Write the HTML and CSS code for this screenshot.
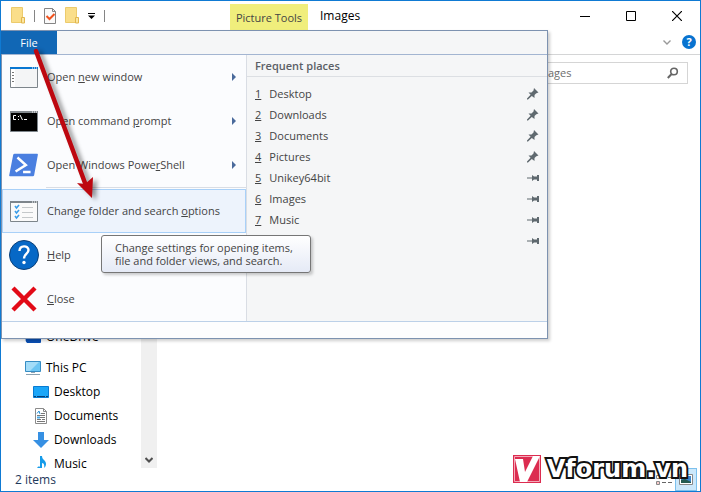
FILE: index.html
```html
<!DOCTYPE html>
<html lang="en">
<head>
<meta charset="utf-8">
<title>Images</title>
<link rel="stylesheet" href="styles.css">
</head>
<body>
<svg class="defs" aria-hidden="true">
  <symbol id="folder" viewBox="0 0 14 17"><path d="M.5.5h11v12h2v3H.5z" fill="#fade8a" stroke="#eccb6c"/><path d="M10.500 10.500h3v5.500h-3z" fill="#fbe7a3" stroke="#e2b64c"/></symbol>
  <symbol id="pinned" viewBox="0 0 12 12"><path d="M7 0l4.500 4.500-1.500.5-1 .5-1.500 1.500V10L4.800 7.900 1 11.500 0 11.500 0 10.500 3.600 6.700 1.500 4.500h3L6.500 2.500z" fill="#5f696f"/></symbol>
  <symbol id="unpinned" viewBox="0 0 12 8"><path d="M0 3.500h5V1l2 1.500h3V1h2v6h-2V5.500H7L5 7V4.500H0z" fill="#5f696f"/></symbol>
</svg>
<div class="window">
  <header class="titlebar">
    <div class="quick">
      <svg class="q-folder"><use href="#folder"/></svg>
      <span class="divider"></span>
      <button class="plain" aria-label="Properties"><svg width="12" height="16" viewBox="0 0 12 16"><path d="M.5.5h8l3 3v12H.5z" fill="#fafafa" stroke="#858585"/><path d="M8.500.5v3h3" fill="none" stroke="#858585"/><path d="M2.500 8l3 3 5-5" fill="none" stroke="#f0521d" stroke-width="2"/></svg></button>
      <button class="plain" aria-label="New folder"><svg class="q-folder"><use href="#folder"/></svg></button>
      <button class="plain" aria-label="Customize"><svg width="7" height="6" viewBox="0 0 7 6"><path d="M0 0h7v1H0zM0 2.500h7L3.500 6z"/></svg></button>
      <span class="divider"></span>
    </div>
    <div class="context">Picture Tools</div>
    <h1>Images</h1>
    <div class="controls">
      <button class="plain" aria-label="Minimize"><svg width="10" height="10"><path d="M0 5.500h10" stroke="#000"/></svg></button>
      <button class="plain" aria-label="Maximize"><svg width="10" height="10"><path d="M.5.5h9v9h-9z" fill="none" stroke="#000"/></svg></button>
      <button class="plain" aria-label="Close"><svg width="10" height="10"><path d="M0 0l10 10M10 0L0 10" stroke="#000" stroke-width="1.200"/></svg></button>
    </div>
  </header>
  <div class="ribbon">
    <button class="plain" aria-label="Expand ribbon"><svg width="8" height="5"><path d="M.5.5L4 4 7.500.5" fill="none" stroke="#999" stroke-width="1.400"/></svg></button>
    <button class="help" aria-label="Help">?</button>
  </div>
  <div class="address">
    <label class="search"><input type="search" placeholder="Search Images" aria-label="Search Images"><svg width="12" height="12" viewBox="0 0 12 12"><circle cx="7" cy="4.500" r="3.300" fill="none" stroke="#666" stroke-width="1.600"/><path d="M4.600 7L.8 11" stroke="#666" stroke-width="2"/></svg></label>
  </div>
  <main class="content">
    <nav class="sidebar">
      <ul>
        <li class="cloud"><svg width="16" height="16" viewBox="0 0 16 16"><path d="M2 14a4 4 0 0 1 2-7 4 4 0 0 1 8 0 3 3 0 0 1 3 7z" fill="#0a4fb4"/></svg><a href="#">OneDrive</a></li>
        <li><svg width="16" height="16" viewBox="0 0 16 16"><path d="M.5 1.500h15v10H.5z" fill="#6cc5f3" stroke="#368cc3"/><path d="M1 2h13L5 11H1z" fill="#a3dcf8"/><path d="M6 12h4v1H6z" fill="#8fa5b5"/><path d="M1 14.500h14" stroke="#8aa1b1"/></svg><a href="#">This PC</a></li>
        <li class="sub"><svg width="16" height="16" viewBox="0 0 16 16"><path d="M.5 2.500h15v11H.5z" fill="#1ba6f8" stroke="#087bd2"/><path d="M1 12.500h14" stroke="#063f75" stroke-dasharray="2 1 8 1"/></svg><a href="#">Desktop</a></li>
        <li class="sub"><svg width="16" height="16" viewBox="0 0 16 16"><path d="M2.500.5h8l3 3v12h-11z" fill="#fff" stroke="#8b8b8b"/><path d="M10.500.5v3h3" fill="none" stroke="#8b8b8b"/><path d="M4 7.500h8M4 9.500h8M4 11.500h4M9 11.500h3M4 13.500h8M8 5.500h4" stroke="#777"/><path d="M4 5.500L6 3l1 3" fill="none" stroke="#2a91d6"/><path d="M4 8.500h3v2H4z" fill="#4aa8e4"/></svg><a href="#">Documents</a></li>
        <li class="sub"><svg width="16" height="16" viewBox="0 0 16 16"><path d="M5 0h6v8h5l-8 8-8-8h5z" fill="#3690e3"/></svg><a href="#">Downloads</a></li>
        <li class="sub"><svg width="16" height="16" viewBox="0 0 16 16"><path d="M7 0h2c0 4 4 4 4 8 0 2-1 3-2 4 1-4-1-5-2-5v6c0 2-5 3-5 0 0-2 2-3 3-2z" fill="#159be9"/></svg><a href="#">Music</a></li>
      </ul>
      <div class="scroll"><svg width="8" height="6"><path d="M.5 1L4 4.500 7.500 1" fill="none" stroke="#505050" stroke-width="2"/></svg></div>
    </nav>
  </main>
  <footer class="status">
    <span>2 items</span>
    <div class="views">
      <button class="plain" aria-label="Details view"><svg width="16" height="10" viewBox="0 0 16 10"><path d="M.5.5h3v3h-3zM.5 6.500h3v3h-3z" fill="#fff" stroke="#888"/><path d="M6 2.500h4M12 2.500h4M6 7.500h4M12 7.500h4" stroke="#666"/><path d="M1.500 7.500h1v1h-1z" fill="#d33"/></svg></button>
      <button class="plain active" aria-label="Large icons view"><svg width="14" height="11" viewBox="0 0 14 11"><path d="M.5.5h13v10H.5z" fill="#fff" stroke="#888"/><path d="M2 2h10v7H2z" fill="#3d86ca"/><path d="M2 6l4-1 6 3v1H2z" fill="#245b50"/></svg></button>
    </div>
  </footer>

  <section class="menu">
    <button class="file">File</button>
    <div class="panels">
      <ul class="commands">
        <li><button><svg width="30" height="30" viewBox="0 0 30 30"><path d="M1.500 5.500h27v20h-27z" fill="#f4f5f6" stroke="#7d858b"/><path d="M1 5h28v2H1z" fill="#0877d2"/><path d="M2 7h4v18H2z" fill="#fff"/><path d="M3 10.500h2M3 13.500h2M3 16.500h2M3 19.500h2" stroke="#777"/><path d="M23 6h5" stroke="#fff" stroke-dasharray="1 1"/></svg><span>Open <u>n</u>ew window</span><i class="more"></i></button></li>
        <li><button><svg width="30" height="30" viewBox="0 0 30 30"><path d="M1.500 5.500h27v20h-27z" fill="#000" stroke="#7d858b"/><path d="M1 5h28v2H1z" fill="#858b90"/><path d="M23 6h5" stroke="#fff" stroke-dasharray="1 1"/><path d="M7 9.500H4.500v4H7M9.500 10v1M9.500 13v1M11 9l2.500 5M15 13.500h3" fill="none" stroke="#fff"/></svg><span>Open command <u>p</u>rompt</span><i class="more"></i></button></li>
        <li><button><svg width="32" height="30" viewBox="0 0 32 30"><path d="M6 3h24q1 0 .8 1l-4 22q-.3 1-1.300 1H1q-1 0-.8-1L4.500 4Q4.800 3 6 3z" fill="#4a7fe0"/><path d="M9 7l9 8-11 7M15 22.500h8" fill="none" stroke="#fff" stroke-width="2.600"/></svg><span>Open Windows Powe<u>r</u>Shell</span><i class="more"></i></button></li>
        <li class="rule"></li>
        <li class="hot"><button aria-describedby="tip"><svg width="30" height="30" viewBox="0 0 30 30"><path d="M1.500 5.500h27v20h-27z" fill="#fafafa" stroke="#7d858b"/><path d="M1 5h28v2H1z" fill="#7d858b"/><path d="M23 6h5" stroke="#fff" stroke-dasharray="1 1"/><path d="M13 11.500h11M13 16.500h11M13 21.500h11" stroke="#c4c8ca"/><path d="M6 10l1.500 2L10 9M6 15l1.500 2 2.500-3M6 20l1.500 2 2.500-3" fill="none" stroke="#3a9de8" stroke-width="1.600"/></svg><span>Change folder and search <u>o</u>ptions</span></button></li>
        <li><button><svg width="30" height="30" viewBox="0 0 30 30"><circle cx="15" cy="15" r="14.500" fill="#0668c6" stroke="#0a3f78"/><path d="M10.500 11c0-6 9-6 9-1 0 4-4.500 4-4.500 8.500" fill="none" stroke="#fff" stroke-width="2.400"/><circle cx="15" cy="22.500" r="1.700" fill="#fff"/></svg><span><u>H</u>elp</span></button></li>
        <li><button><svg width="30" height="30" viewBox="0 0 30 30"><path d="M4 4l22 22M26 4L4 26" stroke="#e20a17" stroke-width="4.400"/></svg><span><u>C</u>lose</span></button></li>
      </ul>
      <div class="places">
        <h2>Frequent places</h2>
        <ul>
          <li><u>1</u><a href="#">Desktop</a><svg><use href="#pinned"/></svg></li>
          <li><u>2</u><a href="#">Downloads</a><svg><use href="#pinned"/></svg></li>
          <li><u>3</u><a href="#">Documents</a><svg><use href="#pinned"/></svg></li>
          <li><u>4</u><a href="#">Pictures</a><svg><use href="#pinned"/></svg></li>
          <li><u>5</u><a href="#">Unikey64bit</a><svg class="flat"><use href="#unpinned"/></svg></li>
          <li><u>6</u><a href="#">Images</a><svg class="flat"><use href="#unpinned"/></svg></li>
          <li><u>7</u><a href="#">Music</a><svg class="flat"><use href="#unpinned"/></svg></li>
          <li><svg class="flat"><use href="#unpinned"/></svg></li>
        </ul>
      </div>
    </div>
    <div class="menu-foot"></div>
  </section>
  <div class="tooltip" id="tip" role="tooltip">Change settings for opening items,<br>file and folder views, and search.</div>
  <svg class="arrow" width="80" height="165" viewBox="0 0 80 165"><path d="M6 11L55 143" stroke="#bd0810" stroke-width="4.500" stroke-linecap="round"/><path d="M47 143l8 1 8-7-1 21z" fill="#bd0810"/></svg>
  <div class="brand">
    <svg width="28" height="28" viewBox="0 0 28 28"><path d="M0 0h28v28H0z" fill="#dc2c50"/><path d="M1.500 1.500h25v25h-25z" fill="none" stroke="#f4a9b8"/><path d="M2 4h8l2 13L20 1h7L14 27H7z" fill="#fff"/></svg>
    <span>Vforum.vn</span>
  </div>
</div>
</body>
</html>
```
FILE: styles.css
```css
* { box-sizing: border-box; }
body { margin: 0; font: 12px/16px "Open Sans", "Noto Sans", sans-serif; color: #000; }
ul { list-style: none; margin: 0; padding: 0; }
a { color: inherit; text-decoration: none; }
button { font: inherit; color: inherit; }
svg { display: block; flex: none; }
.defs { position: absolute; width: 0; height: 0; }
.plain { display: flex; align-items: center; justify-content: center; border: 0; padding: 0; background: none; }

.window { position: relative; display: flex; flex-direction: column; height: 100vh; border: 1px solid #0f7ad3; background: #fff; overflow: hidden; }
.titlebar { display: flex; align-items: center; height: 29px; }
.quick { display: flex; align-items: center; width: 229px; padding-left: 10px; gap: 9px; }
.q-folder { width: 14px; height: 17px; }
.divider { width: 1px; height: 12px; background: #858585; }
.context { align-self: flex-end; width: 78px; height: 26px; background: #f0ee7c; color: #444; font-size: 11px; line-height: 28px; text-align: center; }
h1 { flex: 1; margin: 0 0 0 12px; font-size: 12px; font-weight: 400; }
.controls { display: flex; }
.controls button { width: 46px; height: 28px; }
.ribbon { display: flex; align-items: center; justify-content: flex-end; gap: 11px; height: 25px; padding-right: 4px; border-bottom: 1px solid #d4d5d6; }
.help { width: 14px; height: 14px; padding: 0; border: 0; border-radius: 50%; background: #0873d0; color: #fff; font-size: 11px; font-weight: 700; line-height: 14px; }
.address { display: flex; justify-content: flex-end; padding: 7px 12px 5px; }
.search { display: flex; align-items: center; width: 200px; height: 22px; padding: 0 8px; border: 1px solid #d5d5d5; }
.search input { flex: 1; min-width: 0; border: 0; padding: 0; outline: 0; font: inherit; font-size: 11px; background: none; }
.search input::placeholder { color: #6d6d6d; opacity: 1; }

.content { display: flex; flex: 1; min-height: 0; }
.sidebar { display: flex; align-items: flex-end; width: 156px; overflow: hidden; }
.sidebar ul { flex: 1; margin-bottom: -8px; }
.sidebar li { display: flex; align-items: center; gap: 5px; height: 24px; padding-left: 24px; }
.sidebar .sub { padding-left: 32px; }
.sidebar .cloud { margin-bottom: 7px; }
.scroll { display: flex; align-items: flex-end; align-self: stretch; justify-content: center; width: 16px; padding-bottom: 5px; background: #f0f0f0; }
.status { display: flex; align-items: center; justify-content: space-between; height: 23px; padding-left: 14px; color: #1e395b; }
.views { display: flex; align-self: stretch; gap: 3px; padding-right: 3px; }
.views button { width: 17px; }
.views .active { width: 22px; border: 1px solid #7cc0ed; background: #cce8fb; }

.menu { position: absolute; top: 29px; left: 0; width: 547px; border: 1px solid #7d92b0; background: #f5f6f7; color: #444; font-size: 11px; box-shadow: 2px 2px 3px #0003; }
.file { display: block; width: 56px; height: 23px; margin-left: -1px; padding: 0; border: 0; background: #1167b5; color: #fff; }
.panels { display: grid; grid-template-columns: 245px 1fr; border-top: 1px solid #a3b5d1; border-bottom: 1px solid #bcd0e8; }
.commands { background: #fbfcfe; border-right: 1px solid #d9dde4; }
.commands button { display: flex; align-items: center; width: 100%; height: 44px; padding: 0 9px 0 6px; border: 1px solid transparent; background: none; text-align: left; }
.commands button svg { width: 30px; margin-right: 8px; overflow: visible; }
.commands span { flex: 1; white-space: nowrap; }
.more { border: 4px solid transparent; border-left-color: #4a6a9b; border-right: 0; }
.rule { height: 2px; margin-left: 44px; border-top: 1px solid #d9dde4; }
.commands .hot button { border-color: #a8d0f8; background: #edf3fc; }
h2 { margin: 0; padding: 3px 8px 2px; border-bottom: 1px solid #dcdfe3; font-size: 11px; font-weight: 600; line-height: 16px; color: #5b5f66; }
.places ul { padding: 6px 8px; }
.places li { display: flex; align-items: center; gap: 8px; height: 21px; }
.places a { flex: 1; }
.places svg { width: 12px; height: 12px; margin-left: auto; }
.places .flat { height: 8px; }
.menu-foot { height: 16px; background: #fdfdfe; }

.tooltip { position: absolute; top: 234px; left: 100px; padding: 5px 13px; min-width: 210px; border: 1px solid #767676; border-radius: 3px; background: linear-gradient(#fff, #e5eaf6); box-shadow: 2px 2px 3px #0003; color: #444; font-size: 11px; line-height: 13px; white-space: nowrap; }
.arrow { position: absolute; top: 39px; left: 29px; pointer-events: none; filter: drop-shadow(4px 2px 2px #0006); }
.brand { position: absolute; right: 12px; bottom: 8px; display: flex; align-items: center; gap: 6px; font: 700 24px/28px "DejaVu Sans", sans-serif; color: #fff; -webkit-text-stroke: 4px #111; paint-order: stroke fill; }
.brand svg { -webkit-text-stroke: 0; }
```
